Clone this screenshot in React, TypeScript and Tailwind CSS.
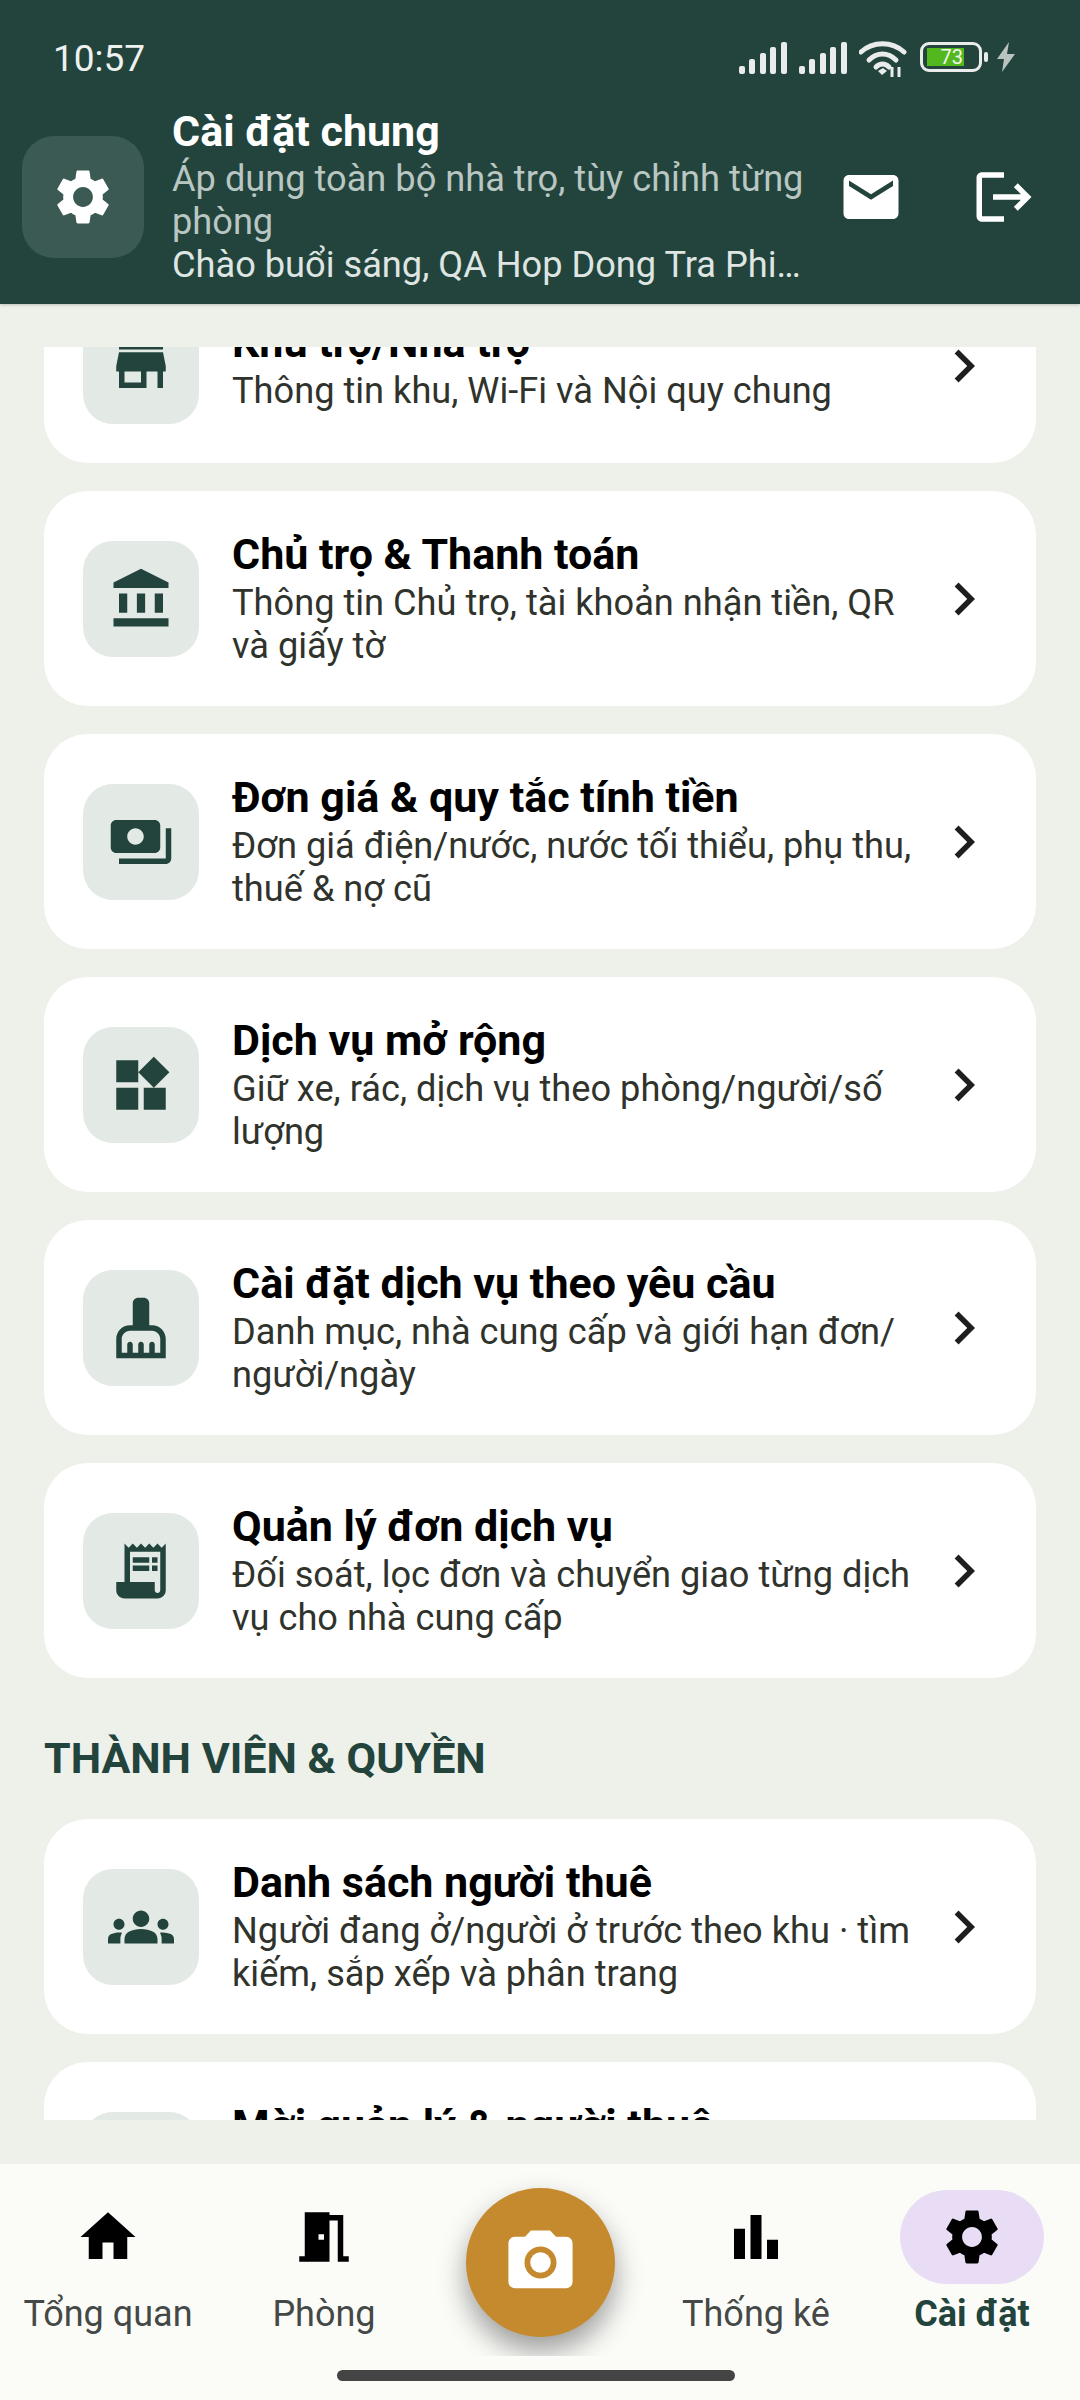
import React from "react";
import {
  MdSettings, MdEmail, MdLogout, MdStore, MdAccountBalance, MdPayments, MdWidgets,
  MdCleaningServices, MdReceiptLong, MdGroups, MdHome, MdMeetingRoom, MdBarChart, MdCameraAlt, MdChevronRight, MdPersonAdd,
} from "react-icons/md";

function Signal() {
  return (
    <svg width="48" height="32" viewBox="0 0 48 32" className="block">
      <rect x="0" y="24" width="6" height="8" rx="2" fill="#e9eceb" />
      <rect x="10" y="17" width="6" height="15" rx="2" fill="#e9eceb" />
      <rect x="21" y="11" width="6" height="21" rx="2" fill="#e9eceb" />
      <rect x="31" y="5" width="6" height="27" rx="2" fill="#e9eceb" />
      <rect x="42" y="0" width="6" height="32" rx="2" fill="#e9eceb" />
    </svg>
  );
}

function Card({ icon, title, sub }: { icon: React.ReactNode; title: string; sub: React.ReactNode }) {
  return (
    <div className="flex items-center bg-white rounded-[44px] pl-[39px] pr-[39px] py-[39.5px]">
      <div className="w-[116px] h-[116px] shrink-0 rounded-[30px] bg-[#e3e9e4] flex items-center justify-center text-[#22443c] text-[66px]">
        {icon}
      </div>
      <div className="flex-1 ml-[33px] min-w-0">
        <div className="text-[43px] leading-[47px] mb-[3px] font-bold text-black">{title}</div>
        <div className="text-[36.2px] leading-[43px] text-[#2f332c]">{sub}</div>
      </div>
      <MdChevronRight className="text-[#1d1f1d] text-[66px] shrink-0" />
    </div>
  );
}

function NavItem({ icon, label, active }: { icon: React.ReactNode; label: string; active?: boolean }) {
  return (
    <div className="flex flex-col items-center pt-[26px]">
      <div className={`w-[144px] h-[94px] rounded-[47px] flex items-center justify-center text-[66px] text-black ${active ? "bg-[#e8ddf5]" : ""}`}>
        {icon}
      </div>
      <div className={`mt-[6px] text-[36px] leading-[48px] whitespace-nowrap ${active ? "font-bold text-[#22443c]" : "text-[#444846]"}`}>
        {label}
      </div>
    </div>
  );
}

export default function App() {
  return (
    <div className="w-[1080px] h-[2400px] bg-[#eef0ea] flex flex-col overflow-hidden" style={{ fontFamily: "Roboto, 'Noto Sans', sans-serif" }}>
      <header className="h-[304px] shrink-0 bg-[#22443c] shadow-[0_1px_3px_rgba(0,0,0,0.2)] flex flex-col">
        <div className="h-[107px] flex justify-between pl-[53px] pr-[64px] pt-[39px]">
          <div className="text-[37px] leading-[40px] text-[#eef1f0]">10:57</div>
          <div className="flex items-start pt-[3px]">
            <Signal />
            <div className="ml-[12px]"><Signal /></div>
            <svg width="48" height="38" viewBox="0 0 48 38" className="ml-[12px] mt-[-2px]">
              <path d="M2 12 C14 1 33 1 45 12" fill="none" stroke="#e9eceb" strokeWidth="5" strokeLinecap="round" />
              <path d="M10 20 C18 12 29 12 37 20" fill="none" stroke="#e9eceb" strokeWidth="5" strokeLinecap="round" />
              <path d="M17 27 C21 23 26 23 30 27" fill="none" stroke="#e9eceb" strokeWidth="5" strokeLinecap="round" />
              <path d="M19 31 L24 28 L28 31 L23 35 Z" fill="#e9eceb" />
              <path d="M33 27 V37 M40 27 V37" stroke="#e9eceb" strokeWidth="3" />
            </svg>
            <div className="ml-[13px] w-[62px] h-[30px] rounded-[9px] border-[3px] border-[#e9eceb] flex items-center pl-[4px]">
              <div className="w-[37px] h-[18px] bg-[#52b81e] text-[20px] leading-[18px] text-[#f2f7ef] text-right pr-[1px]">73</div>
            </div>
            <div className="w-[4px] h-[10px] rounded-[2px] bg-[#e9eceb] ml-[2px] mt-[10px]" />
            <svg width="20" height="30" viewBox="0 0 20 30" className="ml-[8px]">
              <path d="M13 0 L1 17 H8 L6 30 L19 12 H11 Z" fill="#b9c4c0" />
            </svg>
          </div>
        </div>
        <div className="flex items-center pl-[22px]">
          <div className="w-[122px] h-[122px] rounded-[32px] bg-[#3b5a53] flex items-center justify-center text-white text-[66px] shrink-0">
            <MdSettings />
          </div>
          <div className="ml-[28px] w-[640px]">
            <div className="text-[43px] leading-[49px] mb-[1px] font-bold text-white">Cài đặt chung</div>
            <div className="text-[36.2px] leading-[43px] text-[#b9c6c2]">Áp dụng toàn bộ nhà trọ, tùy chỉnh từng phòng</div>
            <div className="text-[36.2px] leading-[43px] text-[#dfe5e2] whitespace-nowrap">Chào buổi sáng, QA Hop Dong Tra Phi…</div>
          </div>
          <MdEmail className="text-white text-[66px] ml-[26px] shrink-0" />
          <MdLogout className="text-white text-[66px] ml-[67px] shrink-0" />
        </div>
      </header>

      <main className="mt-[43px] h-[1773px] shrink-0 overflow-hidden px-[44px]">
        <div className="mt-[-79px] flex flex-col gap-[28px]">
          <Card icon={<MdStore />} title="Khu trọ/Nhà trọ" sub="Thông tin khu, Wi-Fi và Nội quy chung" />
          <Card icon={<MdAccountBalance />} title="Chủ trọ & Thanh toán" sub="Thông tin Chủ trọ, tài khoản nhận tiền, QR và giấy tờ" />
          <Card icon={<MdPayments />} title="Đơn giá & quy tắc tính tiền" sub="Đơn giá điện/nước, nước tối thiểu, phụ thu, thuế & nợ cũ" />
          <Card icon={<MdWidgets />} title="Dịch vụ mở rộng" sub="Giữ xe, rác, dịch vụ theo phòng/người/số lượng" />
          <Card icon={<MdCleaningServices />} title="Cài đặt dịch vụ theo yêu cầu" sub="Danh mục, nhà cung cấp và giới hạn đơn/ người/ngày" />
          <Card icon={<MdReceiptLong />} title="Quản lý đơn dịch vụ" sub="Đối soát, lọc đơn và chuyển giao từng dịch vụ cho nhà cung cấp" />
          <h2 className="text-[43px] leading-[50px] font-bold text-[#22443c] mt-[27px] mb-[8px]">THÀNH VIÊN & QUYỀN</h2>
          <Card icon={<MdGroups />} title="Danh sách người thuê" sub="Người đang ở/người ở trước theo khu · tìm kiếm, sắp xếp và phân trang" />
          <Card icon={<MdPersonAdd />} title="Mời quản lý & người thuê" sub="Mời quản lý và người thuê vào nhà trọ, phân quyền theo từng khu" />
        </div>
      </main>

      <nav className="relative mt-[43px] h-[237px] shrink-0 bg-[#fbfcf8] border-t border-[#eceee8] overflow-hidden">
        <div className="grid grid-cols-5 h-[192px]">
          <NavItem icon={<MdHome />} label="Tổng quan" />
          <NavItem icon={<MdMeetingRoom />} label="Phòng" />
          <div className="flex justify-center pt-[24px] overflow-hidden">
            <div className="w-[149px] h-[149px] shrink-0 rounded-full bg-[#c58a2e] flex items-center justify-center text-white text-[77px] shadow-[0_14px_28px_rgba(0,0,0,0.38)]">
              <MdCameraAlt />
            </div>
          </div>
          <NavItem icon={<MdBarChart />} label="Thống kê" />
          <NavItem icon={<MdSettings />} label="Cài đặt" active />
        </div>
        <div className="absolute left-[337px] bottom-[19px] w-[398px] h-[11px] rounded-full bg-[#444444]" />
      </nav>
    </div>
  );
}
